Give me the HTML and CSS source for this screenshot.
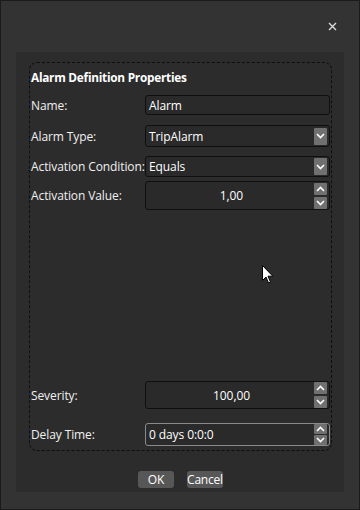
FILE: index.html
```html
<!DOCTYPE html>
<html>
<head>
<meta name="viewport" content="width=device-width, initial-scale=1">
<link rel="stylesheet" href="styles.css">
</head>
<body>

<div class="window">
  <div class="titlebar">
    <svg class="close" width="9" height="9" viewBox="0 0 9 9">
      <path d="M1 1 L8 8 M8 1 L1 8" stroke="#dcdcdc" stroke-width="1.4"/>
    </svg>
  </div>

  <div class="panel">
    <div class="group">
      <div class="group-title">Alarm Definition Properties</div>

      <div class="row row-name">
        <span class="label">Name:</span>
        <div class="field">Alarm</div>
      </div>

      <div class="row row-type">
        <span class="label">Alarm Type:</span>
        <div class="field combo">
          <span class="value">TripAlarm</span>
          <span class="drop">
            <svg width="9" height="6" viewBox="0 0 9 6"><path d="M1 1 L4.5 4.5 L8 1" fill="none" stroke="#fff" stroke-width="1.6"/></svg>
          </span>
        </div>
      </div>

      <div class="row row-cond">
        <span class="label">Activation Condition:</span>
        <div class="field combo">
          <span class="value">Equals</span>
          <span class="drop">
            <svg width="9" height="6" viewBox="0 0 9 6"><path d="M1 1 L4.5 4.5 L8 1" fill="none" stroke="#fff" stroke-width="1.6"/></svg>
          </span>
        </div>
      </div>

      <div class="row row-value">
        <span class="label">Activation Value:</span>
        <div class="field spin">
          <span class="value center">1,00</span>
          <span class="spin-btns">
            <span class="spin-btn"><svg width="9" height="6" viewBox="0 0 9 6"><path d="M1 5 L4.5 1.5 L8 5" fill="none" stroke="#fff" stroke-width="1.6"/></svg></span>
            <span class="spin-btn"><svg width="9" height="6" viewBox="0 0 9 6"><path d="M1 1 L4.5 4.5 L8 1" fill="none" stroke="#fff" stroke-width="1.6"/></svg></span>
          </span>
        </div>
      </div>

      <div class="spacer"></div>

      <div class="row row-severity">
        <span class="label">Severity:</span>
        <div class="field spin">
          <span class="value center">100,00</span>
          <span class="spin-btns">
            <span class="spin-btn"><svg width="9" height="6" viewBox="0 0 9 6"><path d="M1 5 L4.5 1.5 L8 5" fill="none" stroke="#fff" stroke-width="1.6"/></svg></span>
            <span class="spin-btn"><svg width="9" height="6" viewBox="0 0 9 6"><path d="M1 1 L4.5 4.5 L8 1" fill="none" stroke="#fff" stroke-width="1.6"/></svg></span>
          </span>
        </div>
      </div>

      <div class="row row-delay">
        <span class="label">Delay Time:</span>
        <div class="field spin light">
          <span class="value">0 days 0:0:0</span>
          <span class="spin-btns small">
            <span class="spin-btn"><svg width="9" height="6" viewBox="0 0 9 6"><path d="M1 5 L4.5 1.5 L8 5" fill="none" stroke="#fff" stroke-width="1.6"/></svg></span>
            <span class="spin-btn"><svg width="9" height="6" viewBox="0 0 9 6"><path d="M1 1 L4.5 4.5 L8 1" fill="none" stroke="#fff" stroke-width="1.6"/></svg></span>
          </span>
        </div>
      </div>
    </div>

    <div class="actions">
      <span class="btn">OK</span>
      <span class="btn">Cancel</span>
    </div>
  </div>

  <!-- mouse pointer captured in the shot -->
  <svg class="cursor" width="13" height="20" viewBox="0 0 13 20">
    <path d="M0.5 0.5 L0.5 15.5 L4 12 L6.5 18 L8.5 17 L6 11.2 L10.8 11.2 Z" fill="#fff" stroke="#000" stroke-width="1"/>
  </svg>
</div>

</body>
</html>
```

FILE: styles.css
```css
body {
  margin: 0;
  background: #1c1c1c;
}

* {
  box-sizing: border-box;
  font-family: 'Open Sans', 'Noto Sans', sans-serif;
}

/* Outer dialog window */
.window {
  position: relative;
  width: 360px;
  height: 510px;
  border: 1px solid #1b1b1b;
  background: #333333;
  display: flex;
  flex-direction: column;
}

.titlebar {
  height: 51px;
  display: flex;
  justify-content: flex-end;
  align-items: flex-start;
  padding: 21px 22px 0 0;
}

/* Darker content panel */
.panel {
  margin: 0 15px;
  height: 440px;
  background: #2c2c2c;
  padding: 10px 12px 4px 13px;
  display: flex;
  flex-direction: column;
}

/* Dashed group box */
.group {
  height: 389px;
  border: 1px dashed #0e0e0e;
  border-radius: 8px;
  padding: 6px 1px 4px 1px;
  display: flex;
  flex-direction: column;
  color: #f0f0f0;
  font-size: 12px;
}

.group-title {
  font-weight: bold;
  font-size: 11.8px;
  line-height: 16px;
  color: #fff;
  letter-spacing: -0.25px;
}

.row {
  display: flex;
  align-items: center;
}

.label {
  width: 114px;
  flex: none;
  white-space: nowrap;
  letter-spacing: -0.1px;
}

.field {
  flex: 1;
  height: 20px;
  border: 1px solid #0f0f0f;
  border-radius: 3px;
  background: #2a2a2a;
  color: #fff;
  display: flex;
  align-items: center;
  padding: 0 2px 0 3px;
  letter-spacing: -0.1px;
}

.value {
  flex: 1;
}

.value.center {
  text-align: center;
}

.row-name { margin-top: 10px; }
.row-type { margin-top: 10px; }
.row-type .field { height: 22px; }
.row-cond { margin-top: 9px; }
.row-cond .field { height: 21px; }
.row-value { margin-top: 4px; }
.row-value .field { height: 29px; }

.spacer {
  flex: 1;
}

.row-severity .field { height: 28px; }
.row-delay { margin-top: 14px; }
.row-delay .field { height: 23px; }

.field.light {
  border-color: #8a8a8a;
}

/* Combo drop button */
.drop {
  width: 13px;
  height: 17px;
  background: #707070;
  border-radius: 1px;
  display: flex;
  align-items: center;
  justify-content: center;
}

/* Spinner buttons */
.spin-btns {
  display: flex;
  flex-direction: column;
  gap: 2px;
}

.spin-btn {
  width: 13px;
  height: 12px;
  background: #707070;
  border-radius: 1px;
  display: flex;
  align-items: center;
  justify-content: center;
}

.spin-btns.small {
  gap: 1px;
}

.spin-btns.small .spin-btn {
  height: 10px;
}

/* Dialog buttons */
.actions {
  margin-top: 20px;
  display: flex;
  justify-content: center;
  gap: 13px;
}

.btn {
  width: 36px;
  height: 17px;
  background: #575757;
  border-radius: 3px;
  color: #fff;
  font-size: 12px;
  line-height: 17px;
  text-align: center;
  letter-spacing: -0.2px;
}

.cursor {
  position: absolute;
  left: 261px;
  top: 264px;
}
```
